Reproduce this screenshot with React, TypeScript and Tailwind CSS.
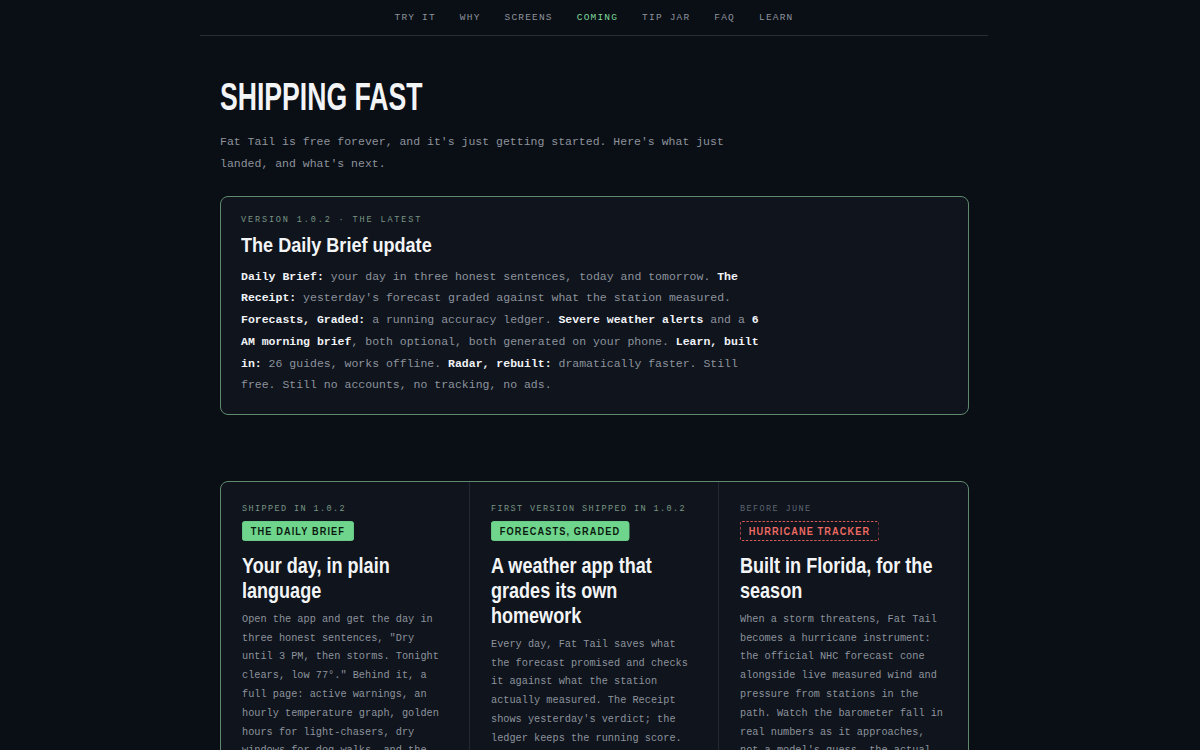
import React from 'react'

const mono = "font-['Liberation_Mono','DejaVu_Sans_Mono',monospace]"
// no condensed face is installed, so headings are Liberation Sans squeezed horizontally
const cond = "font-['Liberation_Sans','Arial',sans-serif] font-bold origin-left"

const navItems = ['TRY IT', 'WHY', 'SCREENS', 'COMING', 'TIP JAR', 'FAQ', 'LEARN']

type Column = {
  label: string
  labelClass: string
  badge: string
  badgeClass: string
  title: string
  body: string
}

const columns: Column[] = [
  {
    label: 'SHIPPED IN 1.0.2',
    labelClass: 'text-[#7a9484]',
    badge: 'THE DAILY BRIEF',
    badgeClass: 'bg-[#6fd58c] text-[#0b1a10] border border-[#6fd58c]',
    title: 'Your day, in plain language',
    body: 'Open the app and get the day in three honest sentences, "Dry until 3 PM, then storms. Tonight clears, low 77°." Behind it, a full page: active warnings, an hourly temperature graph, golden hours for light-chasers, dry windows for dog walks, and the tides.',
  },
  {
    label: 'FIRST VERSION SHIPPED IN 1.0.2',
    labelClass: 'text-[#7a9484]',
    badge: 'FORECASTS, GRADED',
    badgeClass: 'bg-[#6fd58c] text-[#0b1a10] border border-[#6fd58c]',
    title: 'A weather app that grades its own homework',
    body: "Every day, Fat Tail saves what the forecast promised and checks it against what the station actually measured. The Receipt shows yesterday's verdict; the ledger keeps the running score.",
  },
  {
    label: 'BEFORE JUNE',
    labelClass: 'text-[#5d6470]',
    badge: 'HURRICANE TRACKER',
    badgeClass: 'border border-dashed border-[#d95a55] text-[#ee6a62]',
    title: 'Built in Florida, for the season',
    body: "When a storm threatens, Fat Tail becomes a hurricane instrument: the official NHC forecast cone alongside live measured wind and pressure from stations in the path. Watch the barometer fall in real numbers as it approaches, not a model's guess, the actual reading.",
  },
]

function B({ children }: { children: React.ReactNode }) {
  return <span className="font-bold text-[#f1f3f6]">{children}</span>
}

export default function App() {
  return (
    <div className={`min-h-screen bg-[#0a0e15] pr-3 ${mono}`}>
      <div className="mx-auto max-w-[788px]">
        {/* Nav */}
        <nav className="flex h-[36px] items-center justify-center gap-[24px] border-b border-[#272c35] pt-px">
          {navItems.map((item) => (
            <span
              key={item}
              className={`text-[9.5px] tracking-[0.125em] ${
                item === 'COMING' ? 'text-[#7ed69a]' : 'text-[#8d939c]'
              }`}
            >
              {item}
            </span>
          ))}
        </nav>

        <main className="pl-5 pr-[19px]">
          <h1 className={`${cond} mt-[41px] scale-x-[0.7] text-[38px] leading-[40px] text-[#f3f4f6]`}>
            SHIPPING FAST
          </h1>
          <p className="mt-[14px] max-w-[528px] text-[11.5px] leading-[22px] text-[#8d939c]">
            Fat Tail is free forever, and it's just getting started. Here's what just landed, and
            what's next.
          </p>

          {/* Latest version card */}
          <section className="mt-[21px] rounded-[8px] border border-[#5f8a6e] bg-[#0f141d] px-5 pb-[18px] pt-[17px]">
            <div className="text-[8.5px] tracking-[0.22em] text-[#7a9484]">VERSION 1.0.2 · THE LATEST</div>
            <h2 className={`${cond} mt-[5px] scale-x-[0.86] text-[21px] leading-[26px] text-[#f3f4f6]`}>
              The Daily Brief update
            </h2>
            <p className="mt-[8px] max-w-[528px] text-[11.5px] leading-[21.7px] text-[#8d939c]">
              <B>Daily Brief:</B> your day in three honest sentences, today and tomorrow.{' '}
              <B>The Receipt:</B> yesterday's forecast graded against what the station measured.{' '}
              <B>Forecasts, Graded:</B> a running accuracy ledger. <B>Severe weather alerts</B> and a{' '}
              <B>6 AM morning brief</B>, both optional, both generated on your phone.{' '}
              <B>Learn, built in:</B> 26 guides, works offline. <B>Radar, rebuilt:</B> dramatically
              faster. Still free. Still no accounts, no tracking, no ads.
            </p>
          </section>

          {/* Roadmap grid */}
          <section className="mt-[66px] grid grid-cols-3 overflow-hidden rounded-[8px] border border-[#5f8a6e] bg-[#0f141d]">
            {columns.map((c, i) => (
              <div
                key={c.label}
                className={`min-w-0 px-[21px] pt-[21px] pb-6 ${i < 2 ? 'border-r border-[#232833]' : ''}`}
              >
                <div className={`text-[8.5px] tracking-[0.165em] ${c.labelClass}`}>{c.label}</div>
                <div
                  className={`${cond} mt-[5px] inline-block scale-x-[0.8] rounded-[3px] px-[10px] py-[1px] text-[11.5px] leading-[16px] tracking-[0.12em] ${c.badgeClass}`}
                >
                  {c.badge}
                </div>
                <h3
                  className={`${cond} mt-[10px] w-[121%] scale-x-[0.82] text-[22px] leading-[25px] text-[#f3f4f6]`}
                >
                  {c.title}
                </h3>
                <p className="mt-[7px] text-[10.25px] leading-[18.8px] text-[#8d939c]">{c.body}</p>
              </div>
            ))}
          </section>
        </main>
      </div>
    </div>
  )
}
